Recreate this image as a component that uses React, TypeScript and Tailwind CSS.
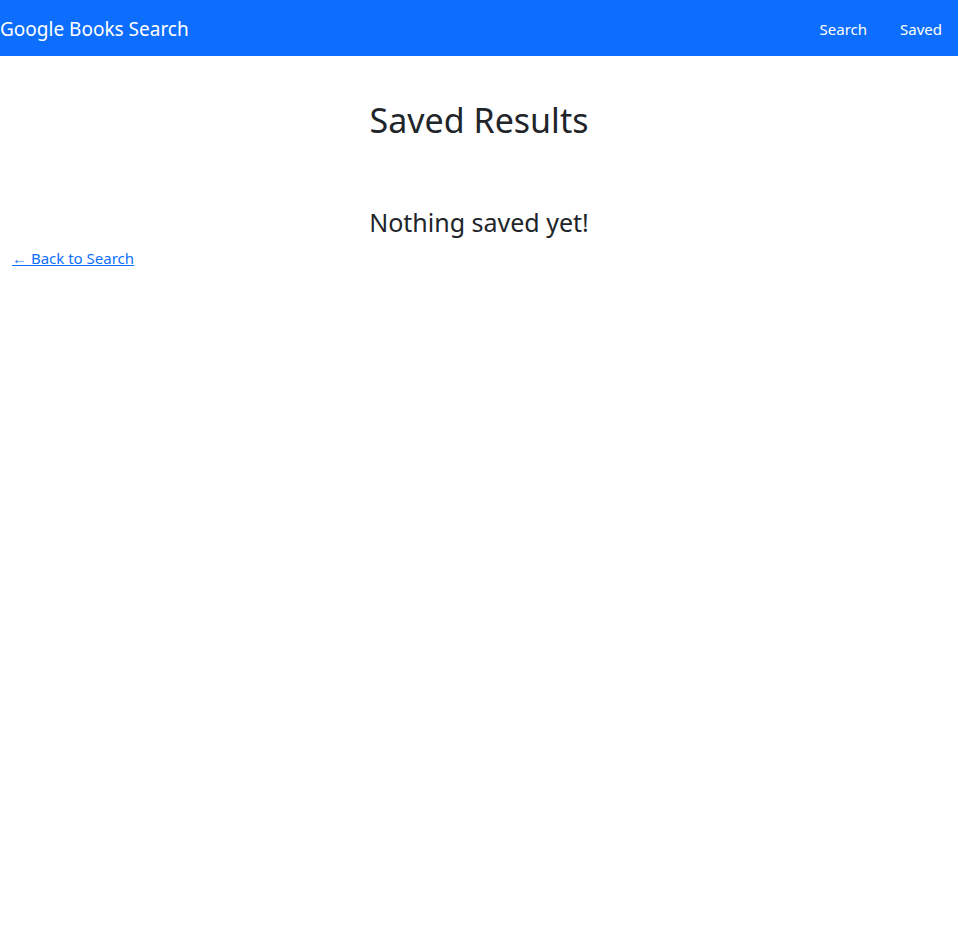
import React from 'react'

export default function App() {
    return (
        <div className="min-h-screen bg-white text-[#212529]" style={{ fontFamily: '"Noto Sans", "Open Sans", sans-serif' }}>
            {/* Navbar */}
            <nav className="flex h-14 items-center justify-between bg-[#0d6efd] pt-[3px]">
                <a href="#" className="text-[19px] leading-none text-white">
                    Google Books Search
                </a>
                <div className="flex items-center gap-[33px] pr-4 text-[15px] leading-none text-white">
                    <a href="#">Search</a>
                    <a href="#">Saved</a>
                </div>
            </nav>

            {/* Content */}
            <div className="pt-[40px]">
                <h1 className="text-center text-[34px] leading-[48px]">Saved Results</h1>
                <h3 className="mt-[61px] text-center text-[25px] leading-[34px]">Nothing saved yet!</h3>
                <div className="px-3 pt-[7px]">
                    <a href="#" className="text-[15px] leading-6 text-[#0d6efd] underline">
                        ← Back to Search
                    </a>
                </div>
            </div>
        </div>
    )
}
